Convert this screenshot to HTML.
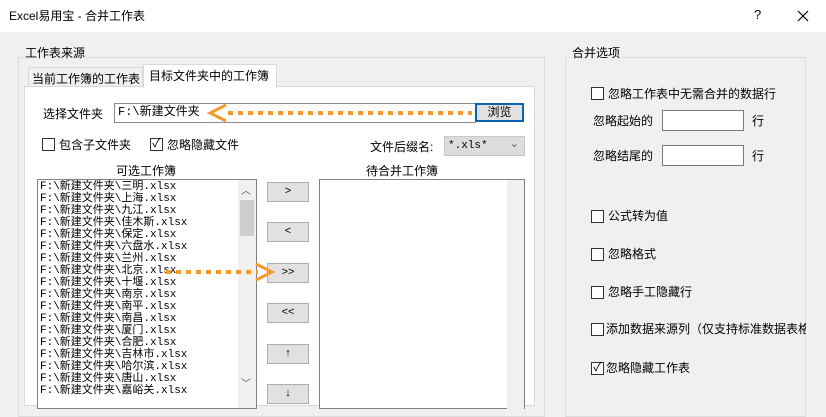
<!DOCTYPE html>
<html><head><meta charset="utf-8"><style>
*{box-sizing:border-box;margin:0;padding:0}
body{width:826px;height:400px;overflow:hidden;background:#f0f0f0;font-family:"Liberation Sans","Noto Sans CJK SC",sans-serif;font-size:12px;color:#000;position:relative}
.a{position:absolute;white-space:nowrap}
.cb{position:absolute;width:13px;height:13px;border:1px solid #333;background:#fff}
.btn{position:absolute;width:42px;height:20px;background:#e1e1e1;border:1px solid #adadad;text-align:center;line-height:17px;font-size:11px}
.inp{position:absolute;background:#fff;border:1px solid #7a7a7a}
.mono{font-family:"Liberation Mono","Noto Sans CJK SC",monospace;font-size:11px;line-height:12px}
</style></head><body>
<div class="a" style="left:0;top:0;width:826px;height:32px;background:#fff"></div>
<div class="a" style="left:9px;top:7px;font-size:12px">Excel易用宝 - 合并工作表</div>
<div class="a" style="left:754px;top:7px;font-size:13px">?</div>
<svg class="a" style="left:797px;top:10px" width="12" height="12"><path d="M1 1L11 11M11 1L1 11" stroke="#000" stroke-width="1.2"/></svg>

<!-- left group -->
<div class="a" style="left:18px;top:57px;width:527px;height:360px;border:1px solid #dcdcdc"></div>
<div class="a" style="left:23px;top:44px;background:#f0f0f0;padding:0 2px">工作表来源</div>
<div class="a" style="left:28px;top:67px;width:115px;height:20px;border:1px solid #d9d9d9;background:#f0f0f0;padding:2px 0 0 3px">当前工作簿的工作表</div>
<div class="a" style="left:24px;top:86px;width:511px;height:320px;background:#fff;border:1px solid #d9d9d9"></div>
<div class="a" style="left:143px;top:64px;width:134px;height:24px;background:#fff;border:1px solid #d9d9d9;border-bottom:none;padding:2px 0 0 5px">目标文件夹中的工作簿</div>

<div class="a" style="left:43px;top:105px">选择文件夹</div>
<div class="inp" style="left:114px;top:103px;width:362px;height:20px;border-color:#8a8a8a"></div>
<div class="a mono" style="left:118px;top:106px;font-size:12px">F:\新建文件夹</div>
<div class="a" style="left:475px;top:103px;width:49px;height:19px;background:#e1e1e1;border:2px solid #0a64ad;text-align:center;line-height:15px">浏览</div>

<div class="cb" style="left:42px;top:138px"></div><div class="a" style="left:59px;top:136px">包含子文件夹</div>
<div class="cb" style="left:150px;top:138px"></div><div class="a" style="left:150px;top:134px;font-size:12px;width:13px;text-align:center">✓</div><div class="a" style="left:167px;top:136px">忽略隐藏文件</div>
<div class="a" style="left:370px;top:138px">文件后缀名:</div>
<div class="a mono" style="left:444px;top:136px;width:81px;height:20px;background:#dcdcdc;border:1px solid #c8c8c8;padding:3px 0 0 3px">*.xls*<span style="position:absolute;right:5px;top:2px;color:#555">⌄</span></div>

<div class="a" style="left:116px;top:162px">可选工作簿</div>
<div class="a" style="left:366px;top:162px">待合并工作簿</div>

<div class="a" style="left:37px;top:179px;width:220px;height:230px;border:1px solid #828282;background:#fff;overflow:hidden">
<div class="mono" style="position:absolute;left:2px;top:1px">
F:\新建文件夹\三明.xlsx<br>F:\新建文件夹\上海.xlsx<br>F:\新建文件夹\九江.xlsx<br>F:\新建文件夹\佳木斯.xlsx<br>F:\新建文件夹\保定.xlsx<br>F:\新建文件夹\六盘水.xlsx<br>F:\新建文件夹\兰州.xlsx<br>F:\新建文件夹\北京.xlsx<br>F:\新建文件夹\十堰.xlsx<br>F:\新建文件夹\南京.xlsx<br>F:\新建文件夹\南平.xlsx<br>F:\新建文件夹\南昌.xlsx<br>F:\新建文件夹\厦门.xlsx<br>F:\新建文件夹\合肥.xlsx<br>F:\新建文件夹\吉林市.xlsx<br>F:\新建文件夹\哈尔滨.xlsx<br>F:\新建文件夹\唐山.xlsx<br>F:\新建文件夹\嘉峪关.xlsx</div>
<div style="position:absolute;left:200px;top:0;width:18px;height:230px;background:#f0f0f0"></div>
<div style="position:absolute;left:202px;top:20px;width:14px;height:36px;background:#cdcdcd"></div>
<div style="position:absolute;left:203px;top:2px;font-size:10px;color:#555">︿</div>
<div style="position:absolute;left:203px;top:195px;font-size:10px;color:#555">﹀</div>
</div>

<div class="btn" style="left:267px;top:182px">&gt;</div>
<div class="btn" style="left:267px;top:222px">&lt;</div>
<div class="btn" style="left:267px;top:263px">&gt;&gt;</div>
<div class="btn" style="left:267px;top:303px">&lt;&lt;</div>
<div class="btn" style="left:267px;top:344px">↑</div>
<div class="btn" style="left:267px;top:384px">↓</div>

<div class="a" style="left:319px;top:179px;width:206px;height:230px;border:1px solid #828282;background:#fff">
<div style="position:absolute;right:0;top:0;width:17px;height:230px;background:#f0f0f0"></div>
</div>

<svg class="a" style="left:0;top:0" width="560" height="400">
<line x1="228" y1="113" x2="472" y2="113" stroke="#f39a2e" stroke-width="4" stroke-dasharray="5,5"/>
<polyline points="226,105 210,113 226,121" fill="none" stroke="#f39a2e" stroke-width="3"/>
<line x1="166" y1="272" x2="258" y2="272" stroke="#f39a2e" stroke-width="4" stroke-dasharray="5,5"/>
<polyline points="256,264 272,272 256,280" fill="none" stroke="#f39a2e" stroke-width="3"/>
</svg>

<!-- right group -->
<div class="a" style="left:565px;top:57px;width:241px;height:360px;border:1px solid #dcdcdc"></div>
<div class="a" style="left:570px;top:44px;background:#f0f0f0;padding:0 2px">合并选项</div>
<div class="cb" style="left:591px;top:87px"></div><div class="a" style="left:608px;top:85px">忽略工作表中无需合并的数据行</div>
<div class="a" style="left:593px;top:112px">忽略起始的</div>
<div class="inp" style="left:662px;top:110px;width:82px;height:21px"></div>
<div class="a" style="left:752px;top:112px">行</div>
<div class="a" style="left:593px;top:147px">忽略结尾的</div>
<div class="inp" style="left:662px;top:145px;width:82px;height:21px"></div>
<div class="a" style="left:752px;top:147px">行</div>
<div class="cb" style="left:591px;top:210px"></div><div class="a" style="left:608px;top:207px">公式转为值</div>
<div class="cb" style="left:591px;top:248px"></div><div class="a" style="left:608px;top:245px">忽略格式</div>
<div class="cb" style="left:591px;top:286px"></div><div class="a" style="left:608px;top:283px">忽略手工隐藏行</div>
<div class="cb" style="left:591px;top:323px"></div><div class="a" style="left:606px;top:320px;width:200px;overflow:hidden">添加数据来源列（仅支持标准数据表格</div>
<div class="cb" style="left:591px;top:362px"></div><div class="a" style="left:591px;top:358px;width:13px;text-align:center">✓</div><div class="a" style="left:606px;top:359px">忽略隐藏工作表</div>
</body></html>
